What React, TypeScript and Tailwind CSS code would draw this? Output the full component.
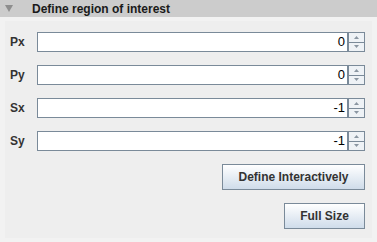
import React from 'react';

const fields = [
  { label: 'Px', value: '0' },
  { label: 'Py', value: '0' },
  { label: 'Sx', value: '-1' },
  { label: 'Sy', value: '-1' },
];

const Spinner = () => (
  <div className="flex flex-col w-[17px] h-[20px]">
    <div className="flex-1 border border-[#7a8a99] bg-[#eef2f6] flex items-center justify-center">
      <svg width="5" height="3" viewBox="0 0 5 3">
        <path d="M2.5 0 L5 3 L0 3 Z" fill="#8a96a2" />
      </svg>
    </div>
    <div className="flex-1 border border-t-0 border-[#7a8a99] bg-[#eef2f6] flex items-center justify-center">
      <svg width="5" height="3" viewBox="0 0 5 3">
        <path d="M0 0 L5 0 L2.5 3 Z" fill="#8a96a2" />
      </svg>
    </div>
  </div>
);

const Button = ({ children, width }: { children: React.ReactNode; width: string }) => (
  <button
    className={`${width} h-[26px] border border-[#7a8a99] bg-gradient-to-b from-white to-[#cfdcea] text-[12px] font-bold text-[#333333] flex items-center justify-center`}
  >
    {children}
  </button>
);

export default function App() {
  return (
    <div
      className="w-[377px] h-[242px] bg-[#f2f2f2] overflow-hidden"
      style={{ fontFamily: '"Liberation Sans", Arial, sans-serif' }}
    >
      <div className="h-[17px] bg-[#cccccc] flex items-center">
        <svg className="ml-[5px]" width="8" height="7" viewBox="0 0 8 7">
          <path d="M0 0 L8 0 L4 7 Z" fill="#8e8e8e" />
        </svg>
        <span className="ml-[19px] text-[12px] font-bold text-[#1a1a1a] leading-none">
          Define region of interest
        </span>
      </div>
      <div className="ml-[5px] mr-[5px] mt-[4px] h-[217px] bg-[#eeeeee] pt-[11px] pl-[5px] pr-[7px]">
        <div className="flex flex-col gap-[13px]">
          {fields.map(f => (
            <div key={f.label} className="flex items-center h-[20px]">
              <span className="w-[27px] text-[12px] font-bold text-[#333333]">{f.label}</span>
              <div className="flex-1 h-[20px] border border-[#7a8a99] bg-white flex items-center justify-end pr-[2px] text-[13px] text-black">
                {f.value}
              </div>
              <Spinner />
            </div>
          ))}
        </div>
        <div className="flex flex-col items-end gap-[13px] mt-[13px]">
          <Button width="w-[143px]">Define Interactively</Button>
          <Button width="w-[81px]">Full Size</Button>
        </div>
      </div>
    </div>
  );
}
